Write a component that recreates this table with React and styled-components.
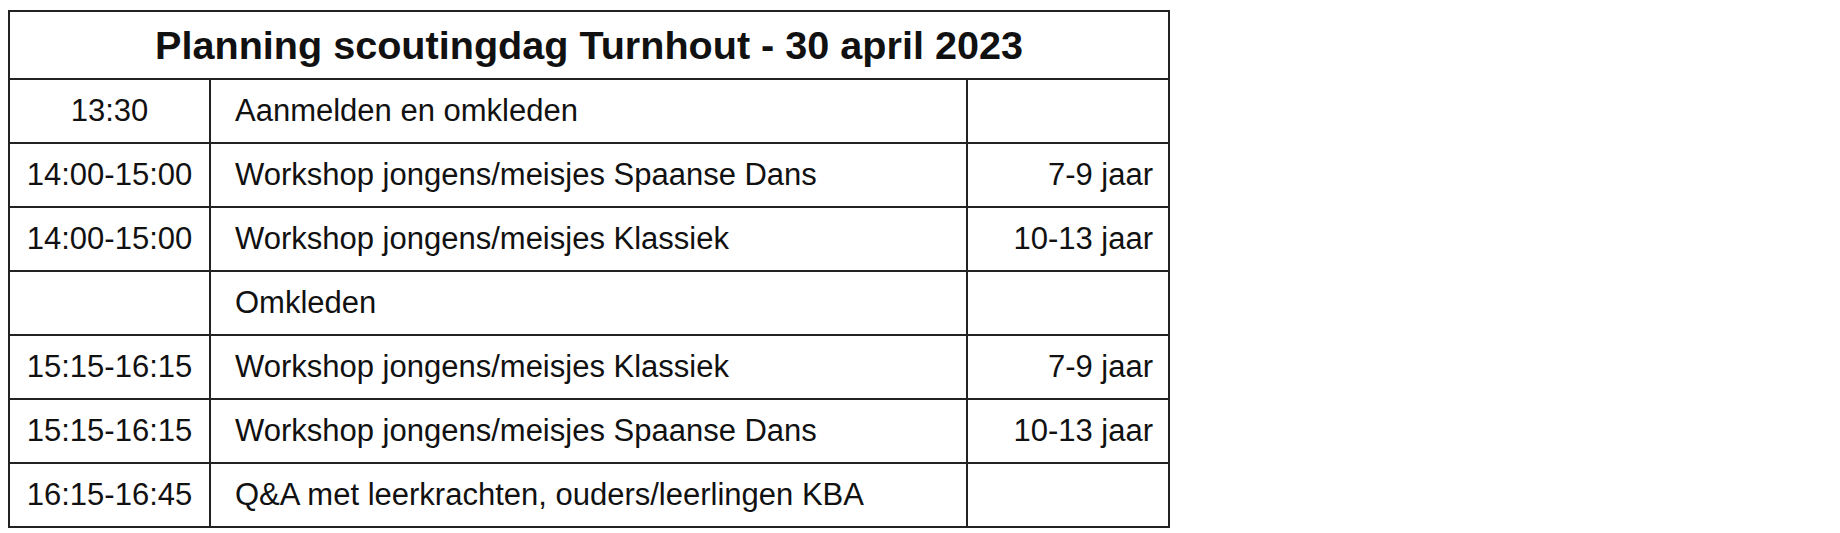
import React from "react";
import styled, { createGlobalStyle } from "styled-components";

const GlobalStyle = createGlobalStyle`
  body {
    margin: 10px 8px;
    background: #ffffff;
    font-family: "Liberation Sans", Arial, sans-serif;
    color: #111111;
  }
`;

const rows = [
  { time: "13:30", activity: "Aanmelden en omkleden", age: "" },
  { time: "14:00-15:00", activity: "Workshop jongens/meisjes Spaanse Dans", age: "7-9 jaar" },
  { time: "14:00-15:00", activity: "Workshop jongens/meisjes Klassiek", age: "10-13 jaar" },
  { time: "", activity: "Omkleden", age: "" },
  { time: "15:15-16:15", activity: "Workshop jongens/meisjes Klassiek", age: "7-9 jaar" },
  { time: "15:15-16:15", activity: "Workshop jongens/meisjes Spaanse Dans", age: "10-13 jaar" },
  { time: "16:15-16:45", activity: "Q&A met leerkrachten, ouders/leerlingen KBA", age: "" },
];

const Schedule = styled.table`
  border-collapse: collapse;
  width: 1160px;
  table-layout: fixed;
`;

const Column = styled.col`
  width: ${(p) => p.$width}px;
`;

const TitleCell = styled.th`
  height: 66px;
  border: 2px solid #222222;
  font-size: 39.6px;
  font-weight: bold;
  text-align: center;
  vertical-align: middle;
  padding: 0;
`;

const Cell = styled.td`
  height: 62px;
  border: 2px solid #222222;
  font-size: 31px;
  vertical-align: middle;
  text-align: ${(p) => p.$align || "left"};
  padding: ${(p) => (p.$align === "right" ? "0 15px 0 0" : p.$align === "center" ? "0" : "0 0 0 24px")};
  white-space: nowrap;
`;

export default function App() {
  return (
    <>
      <GlobalStyle />
      <Schedule>
        <colgroup>
          <Column $width={201} />
          <Column $width={757} />
          <Column $width={202} />
        </colgroup>
        <thead>
          <tr>
            <TitleCell colSpan={3}>Planning scoutingdag Turnhout - 30 april 2023</TitleCell>
          </tr>
        </thead>
        <tbody>
          {rows.map((row, i) => (
            <tr key={i}>
              <Cell $align="center">{row.time}</Cell>
              <Cell>{row.activity}</Cell>
              <Cell $align="right">{row.age}</Cell>
            </tr>
          ))}
        </tbody>
      </Schedule>
    </>
  );
}
